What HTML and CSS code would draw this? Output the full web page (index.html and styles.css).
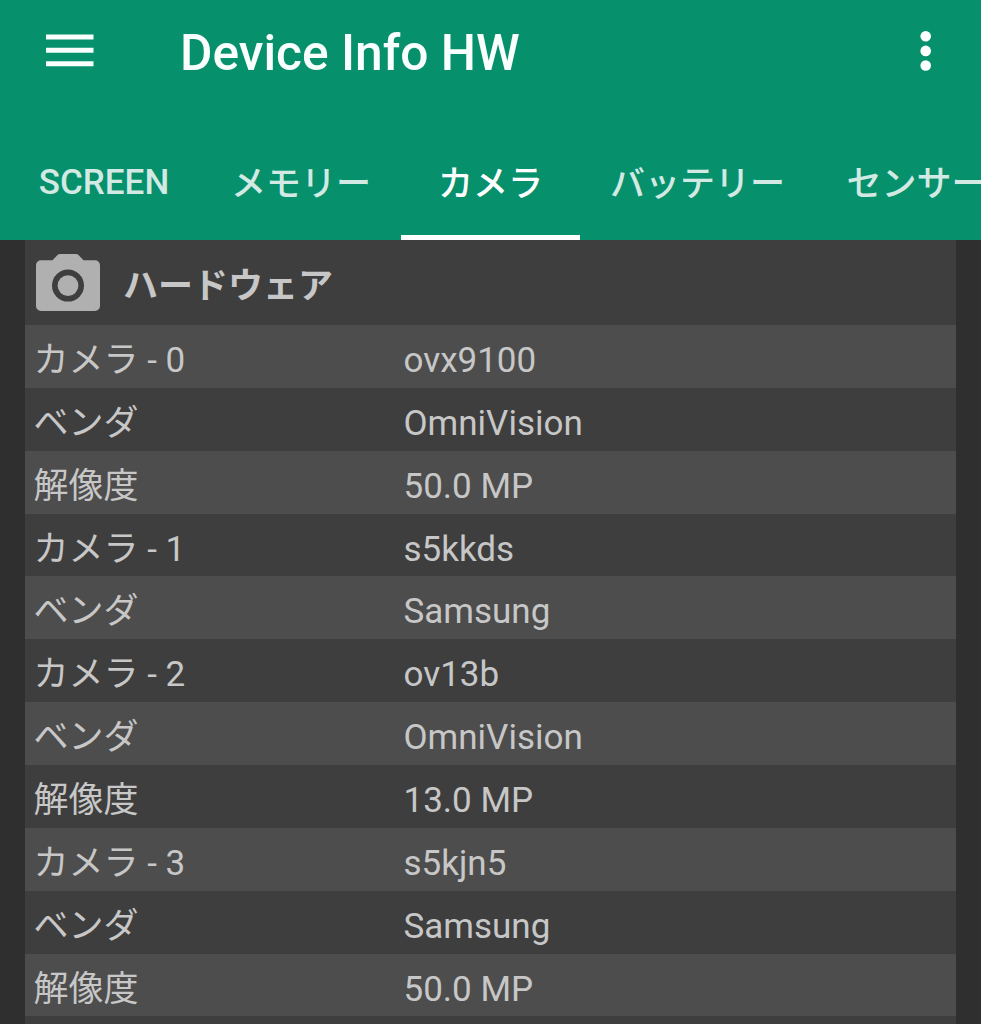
FILE: index.html
```
<!DOCTYPE html>
<html lang="ja">
<head>
<meta charset="utf-8">
<title>Device Info HW</title>
<link rel="stylesheet" href="styles.css">
</head>
<body>
<header class="app-header">
  <div class="toolbar">
    <svg class="menu-icon" width="48" height="34" viewBox="0 0 48 34"><path d="M0 2.900h47.500M0 16.300h47.500M0 29.700h47.500" stroke="#f8fffd" stroke-width="5"/></svg>
    <h1 class="title">Device Info HW</h1>
    <svg class="more-icon" width="12" height="40" viewBox="0 0 12 40" fill="#fff"><circle cx="5.700" cy="5.300" r="5.300"/><circle cx="5.700" cy="19.900" r="5.300"/><circle cx="5.700" cy="34.500" r="5.300"/></svg>
  </div>
  <nav class="tabs">
    <div class="tab latin tab-screen"><span>SCREEN</span></div>
    <div class="tab tab-memory"><span>メモリー</span></div>
    <div class="tab tab-camera active"><span>カメラ</span></div>
    <div class="tab tab-battery"><span>バッテリー</span></div>
    <div class="tab tab-sensor"><span>センサー</span></div>
  </nav>
</header>
<main class="panel">
  <div class="section">
    <svg class="camera-icon" width="64" height="58" viewBox="0 0 64 58"><path fill="#b0b0b0" fill-rule="evenodd" d="M24 0h16q1.500 0 2.500 1l5 5.200H59a5 5 0 0 1 5 5V52a5 5 0 0 1-5 5H5a5 5 0 0 1-5-5V11.200a5 5 0 0 1 5-5h11.500l5-5.200q1-1 2.500-1zM32 15.600a16 16 0 1 0 0 32 16 16 0 0 0 0-32z"/><circle cx="32" cy="31.600" r="10.400" fill="#b0b0b0"/></svg>
    <h2 class="section-title">ハードウェア</h2>
  </div>
  <div class="row"><span class="key">カメラ - 0</span><span class="value">ovx9100</span></div>
  <div class="row"><span class="key">ベンダ</span><span class="value">OmniVision</span></div>
  <div class="row"><span class="key">解像度</span><span class="value">50.0 MP</span></div>
  <div class="row"><span class="key">カメラ - 1</span><span class="value">s5kkds</span></div>
  <div class="row"><span class="key">ベンダ</span><span class="value">Samsung</span></div>
  <div class="row"><span class="key">カメラ - 2</span><span class="value">ov13b</span></div>
  <div class="row"><span class="key">ベンダ</span><span class="value">OmniVision</span></div>
  <div class="row"><span class="key">解像度</span><span class="value">13.0 MP</span></div>
  <div class="row"><span class="key">カメラ - 3</span><span class="value">s5kjn5</span></div>
  <div class="row"><span class="key">ベンダ</span><span class="value">Samsung</span></div>
  <div class="row"><span class="key">解像度</span><span class="value">50.0 MP</span></div>
  <div class="row"></div>
</main>
</body>
</html>
```
FILE: styles.css
```
* { box-sizing: border-box; }
body {
  margin: 0;
  height: 1024px;
  overflow: hidden;
  background: #2f2f2f;
  font-family: Roboto, "Noto Sans CJK JP", sans-serif;
}
.app-header { height: 240px; background: #06906b; color: #fff; }
.toolbar { display: flex; align-items: center; height: 125px; padding: 0 49px 23px 46px; }
.title { margin: 3px auto 0 86px; font-size: 49.700px; font-weight: 500; line-height: 60px; color: #f8fffd; }
.tabs { display: flex; height: 115px; overflow: hidden; white-space: nowrap; }
.tab {
  flex: none;
  display: flex;
  align-items: center;
  justify-content: center;
  height: 115px;
  padding-top: 9px;
  border-bottom: 5px solid transparent;
  font-size: 35px;
  font-weight: 500;
  color: #d3e9e3;
}
.tab span { line-height: 52px; }
.latin { padding-top: 6px; }
.tab-screen { width: 201px; padding-left: 7px; }
.tab-memory { width: 200px; }
.tab-camera { width: 179px; }
.tab-battery { width: 235px; }
.tab-sensor { width: 203px; }
.active { color: #fff; border-bottom-color: #fff; }
.panel { width: 931px; height: 784px; margin-left: 25px; overflow: hidden; background: #3e3e3e; color: #c7c7c7; }
.section { display: flex; align-items: center; gap: 23px; height: 85px; padding-left: 11px; }
.section-title { margin: 0; padding-top: 8px; font-size: 35px; font-weight: 700; line-height: 52px; }
.row { display: flex; align-items: center; height: 62.860px; padding: 9px 0 0 8.500px; font-size: 35px; line-height: 52px; }
.row:nth-child(even) { background: #4d4d4d; }
.key { width: 370px; }
```
